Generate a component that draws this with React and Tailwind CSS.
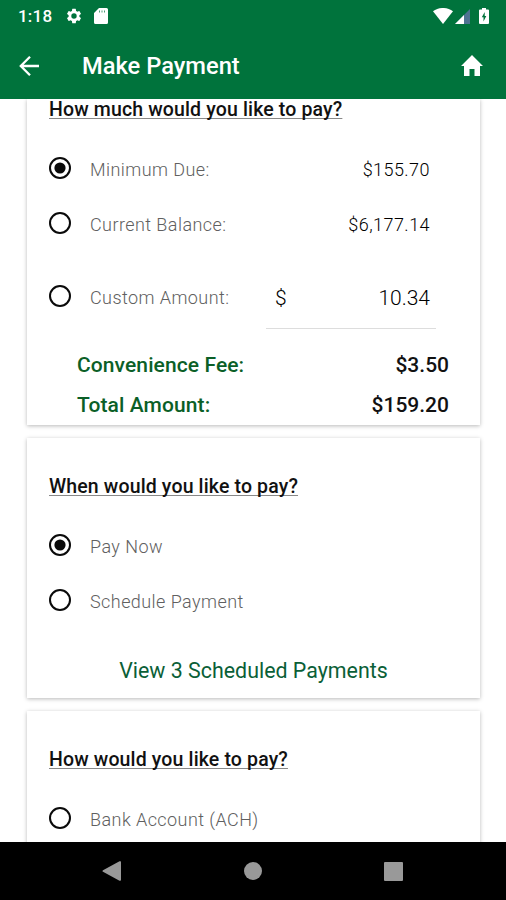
import React, { useState } from 'react';

function Radio({ checked }) {
  return (
    <svg viewBox="0 0 24 24" className="w-6 h-6 shrink-0">
      <circle cx="12" cy="12" r="10" fill="none" stroke="#0a0a0a" strokeWidth="2" />
      {checked && <circle cx="12" cy="12" r="5.6" fill="#0a0a0a" />}
    </svg>
  );
}

function Option({ label, checked, onSelect, children }) {
  return (
    <div className="flex items-center h-[55px] pl-[21px] pr-[50px]">
      <button type="button" onClick={onSelect} className="flex items-center">
        <Radio checked={checked} />
        <span className="ml-[18px] mt-[5px] text-[18px] leading-6 font-light tracking-[0.43px] text-[#606060] whitespace-nowrap">
          {label}
        </span>
      </button>
      {children}
    </div>
  );
}

function Heading({ children }) {
  return (
    <h2 className="ml-[22px] w-fit text-[19.5px] leading-[22px] font-medium tracking-[0.14px] text-[#111] whitespace-nowrap underline decoration-[#888] decoration-1 underline-offset-[2px] [text-decoration-skip-ink:none]">
      {children}
    </h2>
  );
}

function Card({ className, children }) {
  return (
    <section className={`ml-[27px] w-[453px] shrink-0 bg-white shadow-[0_1px_4px_rgba(0,0,0,0.28)] ${className}`}>
      {children}
    </section>
  );
}

export default function App() {
  const [amount, setAmount] = useState('minimum');
  const [when, setWhen] = useState('now');
  const [method, setMethod] = useState(null);

  return (
    <div className="w-[506px] h-[900px] flex flex-col overflow-hidden bg-white font-['Roboto',sans-serif]">

      {/* Status bar + toolbar */}
      <header className="h-[99px] shrink-0 bg-[#00733c] text-white">
        <div className="h-8 flex items-center pl-[18px] pr-[17px]">
          <span className="w-[34px] text-[17px] leading-5 font-medium tracking-[0.2px]">1:18</span>
          <svg viewBox="0 0 24 24" className="ml-[13px] w-[18px] h-[18px]" fill="currentColor">
            <path d="M19.14 12.94c.04-.3.06-.61.06-.94 0-.32-.02-.64-.07-.94l2.03-1.58a.49.49 0 0 0 .12-.61l-1.92-3.32a.49.49 0 0 0-.59-.22l-2.39.96a7 7 0 0 0-1.62-.94l-.36-2.54a.48.48 0 0 0-.48-.41h-3.84a.47.47 0 0 0-.47.41l-.36 2.54c-.59.24-1.13.57-1.62.94l-2.39-.96a.48.48 0 0 0-.59.22L2.74 8.87a.47.47 0 0 0 .12.61l2.03 1.58a6 6 0 0 0-.09.94c0 .31.02.64.07.94l-2.03 1.58a.49.49 0 0 0-.12.61l1.92 3.32c.12.22.37.29.59.22l2.39-.96c.5.38 1.03.7 1.62.94l.36 2.54c.05.24.24.41.48.41h3.84c.24 0 .44-.17.47-.41l.36-2.54a7 7 0 0 0 1.62-.94l2.39.96c.22.08.47 0 .59-.22l1.92-3.32a.47.47 0 0 0-.12-.61zM12 15.6a3.6 3.6 0 1 1 0-7.2 3.6 3.6 0 0 1 0 7.2z" />
          </svg>
          <svg viewBox="0 0 14 16" className="ml-[11px] w-[14px] h-4" fill="currentColor">
            <path d="M5 0h7.500a1.500 1.500 0 0 1 1.500 1.500v13a1.500 1.500 0 0 1-1.500 1.500h-11A1.500 1.500 0 0 1 0 14.500V5z" />
            <path d="M5.500 2.500v2M8 2.500v2M10.500 2.500v2" stroke="#00733c" strokeWidth="0.7" />
          </svg>
          <svg viewBox="0 0 20 16" className="ml-auto w-5 h-4" fill="currentColor">
            <path d="M0 3.200C5.500-1.100 14.500-1.100 20 3.200L10 16z" />
          </svg>
          <svg viewBox="0 0 15 15" className="ml-[2px] w-[15px] h-[15px]">
            <path d="M0 15 15 0v15z" fill="#4e7291" />
            <path d="M0 15 9 6v9z" fill="#fff" />
          </svg>
          <svg viewBox="0 0 10 16" className="ml-[9px] w-[10px] h-4" fill="currentColor">
            <path d="M3 0h4v1.500h2a1 1 0 0 1 1 1V15a1 1 0 0 1-1 1H1a1 1 0 0 1-1-1V2.500a1 1 0 0 1 1-1h2z" />
            <path d="M5.700 4 2.800 9.300h1.700V13.500l2.800-5.600H5.700z" fill="#00733c" />
          </svg>
        </div>
        <div className="h-[67px] flex items-center pl-[19px] pr-[23px]">
          <svg viewBox="0 0 20 20" className="w-5 h-5" fill="none" stroke="currentColor" strokeWidth="2.300">
            <path d="M20 10H2M11 .8 1.800 10l9.200 9.200" />
          </svg>
          <h1 className="ml-[43px] text-[23.7px] leading-8 font-medium whitespace-nowrap">Make Payment</h1>
          <svg viewBox="0 0 22 21" className="ml-auto w-[22px] h-[21px]" fill="currentColor">
            <path d="M11 0 22 11h-3v10h-5.500v-7h-5v7H3V11H0z" />
          </svg>
        </div>
      </header>

      {/* Scrolled form */}
      <main className="flex-1 min-h-0 overflow-hidden flex flex-col">
        <Card className="h-[326px]">
          <Heading>How much would you like to pay?</Heading>
          <div className="pt-[19px]">
            <Option label="Minimum Due:" checked={amount === 'minimum'} onSelect={() => setAmount('minimum')}>
              <span className="ml-auto mt-[5px] text-[18px] leading-6 font-light tracking-[0.45px] text-black">$155.70</span>
            </Option>
            <Option label="Current Balance:" checked={amount === 'balance'} onSelect={() => setAmount('balance')}>
              <span className="ml-auto mt-[5px] text-[18px] leading-6 font-light tracking-[0.45px] text-black">$6,177.14</span>
            </Option>
          </div>
          <div className="pt-[18px]">
            <Option label="Custom Amount:" checked={amount === 'custom'} onSelect={() => setAmount('custom')}>
              <span className="ml-auto w-[155px] mt-[5px] flex justify-between text-[21px] leading-6 font-light text-black">
                <span>$</span>
                <span>10.34</span>
              </span>
            </Option>
            <div className="ml-[239px] mt-[5px] w-[170px] h-px bg-[#ddd]" />
          </div>
          <div className="mt-[16px] pl-[50px] pr-[31px] text-[21px] font-medium text-[#111]">
            <div className="h-[41px] flex items-center justify-between">
              <span className="text-[#0b5f27] tracking-[0.1px]">Convenience Fee:</span>
              <span>$3.50</span>
            </div>
            <div className="h-10 flex items-center justify-between">
              <span className="text-[#0b5f27] tracking-[0.1px]">Total Amount:</span>
              <span>$159.20</span>
            </div>
          </div>
        </Card>

        <Card className="mt-[13px] h-[260px] pt-[38px]">
          <Heading>When would you like to pay?</Heading>
          <div className="pt-[19px]">
            <Option label="Pay Now" checked={when === 'now'} onSelect={() => setWhen('now')} />
            <Option label="Schedule Payment" checked={when === 'later'} onSelect={() => setWhen('later')} />
          </div>
          <button type="button" className="mt-[30px] block w-full text-center text-[21.4px] leading-7 text-[#0b5f37]">
            View 3 Scheduled Payments
          </button>
        </Card>

        <Card className="mt-[13px] h-[260px] pt-[38px]">
          <Heading>How would you like to pay?</Heading>
          <div className="pt-[19px]">
            <Option label="Bank Account (ACH)" checked={method === 'ach'} onSelect={() => setMethod('ach')} />
          </div>
        </Card>
      </main>

      {/* System navigation */}
      <nav className="h-[58px] shrink-0 bg-black flex items-center justify-between pl-[102px] pr-[103px]">
        <svg viewBox="0 0 20 20" className="w-5 h-5" fill="#999">
          <path d="M1 9.200 17.500.3a1 1 0 0 1 1.500.9v17.600a1 1 0 0 1-1.500.9L1 10.800a1 1 0 0 1 0-1.600z" />
        </svg>
        <div className="w-[18px] h-[18px] rounded-full bg-[#999]" />
        <div className="w-[19px] h-[19px] rounded-[1px] bg-[#999]" />
      </nav>
    </div>
  );
}
